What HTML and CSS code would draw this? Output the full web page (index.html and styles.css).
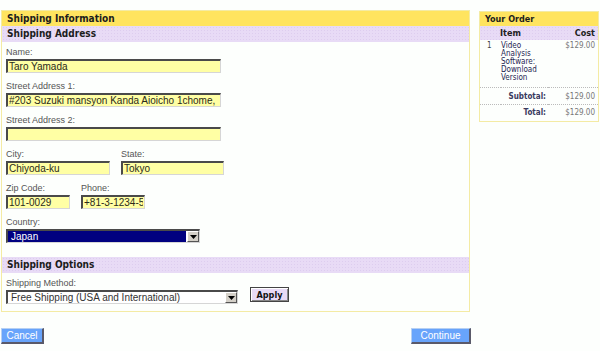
FILE: index.html
```html
<!DOCTYPE html>
<html>
<head>
<meta charset="utf-8">
<link rel="stylesheet" href="styles.css">
</head>
<body>
<div class="page">
  <div class="main-col">
    <div class="panel">
      <div class="panel-title">Shipping Information</div>
      <div class="section-head">Shipping Address</div>
      <div class="fields">
        <div class="field">
          <label>Name:</label>
          <input class="text w-full" value="Taro Yamada">
        </div>
        <div class="field">
          <label>Street Address 1:</label>
          <input class="text w-full" value="#203 Suzuki mansyon Kanda Aioicho 1chome,">
        </div>
        <div class="field">
          <label>Street Address 2:</label>
          <input class="text w-full" value="">
        </div>
        <div class="row">
          <div class="field">
            <label>City:</label>
            <input class="text w-city" value="Chiyoda-ku">
          </div>
          <div class="field">
            <label>State:</label>
            <input class="text w-state" value="Tokyo">
          </div>
        </div>
        <div class="row">
          <div class="field">
            <label>Zip Code:</label>
            <input class="text w-short" value="101-0029">
          </div>
          <div class="field">
            <label>Phone:</label>
            <input class="text w-short" value="+81-3-1234-5678">
          </div>
        </div>
        <div class="field">
          <label>Country:</label>
          <div class="select country">
            <span class="value">Japan</span>
            <span class="arrow"><svg width="7" height="4" viewBox="0 0 7 4"><path d="M0 0H7L3.5 4Z" fill="#000"/></svg></span>
          </div>
        </div>
      </div>
      <div class="section-head">Shipping Options</div>
      <div class="fields options">
        <label>Shipping Method:</label>
        <div class="method-row">
          <div class="select method">
            <span class="value">Free Shipping (USA and International)</span>
            <span class="arrow"><svg width="7" height="4" viewBox="0 0 7 4"><path d="M0 0H7L3.5 4Z" fill="#000"/></svg></span>
          </div>
          <button class="apply">Apply</button>
        </div>
      </div>
    </div>
    <div class="actions">
      <button class="btn btn-cancel">Cancel</button>
      <button class="btn btn-continue">Continue</button>
    </div>
  </div>
  <aside class="order">
    <div class="order-title">Your Order</div>
    <table class="order-table">
      <thead>
        <tr><th class="th-item" colspan="2">Item</th><th class="th-cost">Cost</th></tr>
      </thead>
      <tbody>
        <tr class="line">
          <td class="num">1</td>
          <td class="item">Video Analysis Software: Download Version</td>
          <td class="cost">$129.00</td>
        </tr>
        <tr class="sum">
          <td class="sum-label" colspan="2">Subtotal:</td>
          <td class="cost">$129.00</td>
        </tr>
        <tr class="sum total">
          <td class="sum-label" colspan="2">Total:</td>
          <td class="cost">$129.00</td>
        </tr>
      </tbody>
    </table>
  </aside>
</div>
</body>
</html>
```
FILE: styles.css
```css
* { box-sizing: border-box; }

body {
  margin: 0;
  background: #fdfffd;
  font-family: "Liberation Sans", Arial, sans-serif;
}

.page {
  display: flex;
  align-items: flex-start;
  gap: 8px;
  padding: 10px 0 0 1px;
}

.main-col { width: 470px; }

.panel {
  width: 469px;
  border: 1px solid #f4eba4;
  background: #fdfffd;
}

.panel-title,
.section-head,
.order-title {
  font-family: "DejaVu Sans Condensed", "DejaVu Sans", sans-serif;
  font-stretch: condensed;
  font-weight: bold;
  color: #1c1c1c;
}

.panel-title {
  height: 15px;
  line-height: 15px;
  font-size: 10px;
  padding-left: 5px;
  background: #ffe45f;
}

.section-head {
  height: 16px;
  line-height: 16px;
  font-size: 10px;
  padding-left: 5px;
  background-color: #e8dbf6;
  background-image: radial-gradient(#ddcdef 0.6px, transparent 0.8px);
  background-size: 3px 3px;
}

.fields { padding: 4px 4px 7px; }

.field { margin-bottom: 7px; }

.row {
  display: flex;
  gap: 11px;
}

label {
  display: block;
  height: 13px;
  line-height: 13px;
  font-size: 9px;
  color: #555;
}

.text {
  display: block;
  height: 14px;
  padding: 0 1px;
  border-style: solid;
  border-width: 2px 1px 1px 2px;
  border-color: #4a4a4a #d6d6d6 #d6d6d6 #4a4a4a;
  background: #ffffa4;
  font: 10px "Liberation Sans", Arial, sans-serif;
  color: #2a2a1a;
  outline: none;
}

.w-full { width: 215px; }
.w-city { width: 104px; }
.w-state { width: 103px; }
.w-short { width: 64px; }

.select {
  display: flex;
  height: 14px;
  border-style: solid;
  border-width: 2px 1px 1px 2px;
  border-color: #4a4a4a #d6d6d6 #d6d6d6 #4a4a4a;
  background: #fff;
  font-size: 10px;
  color: #333;
}

.select .value {
  flex: 1;
  line-height: 11px;
  padding-left: 3px;
  white-space: nowrap;
  overflow: hidden;
}

.country { width: 194px; }

.country .value {
  background: #000080;
  color: #fff;
  margin: 0 1px 0 0;
}

.method { width: 232px; }

.select .arrow {
  width: 12px;
  display: flex;
  align-items: center;
  justify-content: center;
  background: #d4d0c8;
  border-style: solid;
  border-width: 1px;
  border-color: #fff #555 #555 #fff;
}

.method-row {
  display: flex;
  align-items: flex-start;
}

.apply {
  width: 39px;
  height: 15px;
  margin: -3px 0 0 12px;
  padding: 0;
  background: #e8dbf6;
  border: 1px solid #444;
  box-shadow: inset 1px 1px 0 #fff, inset -1px -1px 0 #888;
  font-family: "DejaVu Sans Condensed", "DejaVu Sans", sans-serif;
  font-stretch: condensed;
  font-weight: bold;
  font-size: 9px;
  color: #111;
}

.actions {
  display: flex;
  justify-content: space-between;
  margin-top: 16px;
}

.btn {
  height: 16px;
  padding: 0;
  background: #68a4fb;
  border-style: solid;
  border-width: 1px 2px 2px 1px;
  border-color: #b6d0f3 #5a5a6a #5a5a6a #b6d0f3;
  font: 10px "Liberation Sans", Arial, sans-serif;
  color: #fff;
}

.btn-cancel { width: 43px; }
.btn-continue { width: 60px; }

.order {
  width: 120px;
  margin-top: 1px;
  border: 1px solid #f4eba4;
  font-family: "DejaVu Sans Condensed", "DejaVu Sans", sans-serif;
  font-stretch: condensed;
}

.order-title {
  height: 14px;
  line-height: 14px;
  font-size: 9px;
  padding-left: 5px;
  background: #ffe45f;
}

.order-table {
  width: 100%;
  border-collapse: collapse;
  font-size: 8px;
}

.order-table th {
  height: 14px;
  padding: 0;
  font-size: 9px;
  font-weight: bold;
  color: #222;
  background-color: #e8dbf6;
  background-image: radial-gradient(#ddcdef 0.6px, transparent 0.8px);
  background-size: 3px 3px;
}

.th-item { text-align: left; padding-left: 20px !important; }
.th-cost { text-align: right; padding-right: 3px !important; }

.order-table td {
  padding: 0;
  vertical-align: top;
}

.line td { padding: 2px 0 5px; line-height: 8px; }

.num { width: 21px; padding-left: 7px !important; color: #444; }

.item { width: 47px; color: #1e1e52; }

.cost {
  text-align: right;
  padding-right: 3px !important;
  color: #777;
}

.sum td {
  border-top: 1px dotted #bbb;
  height: 17px;
  vertical-align: middle;
}

.total td { height: 16px; }

.sum-label {
  text-align: right;
  padding-right: 2px !important;
  font-weight: bold;
  color: #3a3a5e;
}
```
